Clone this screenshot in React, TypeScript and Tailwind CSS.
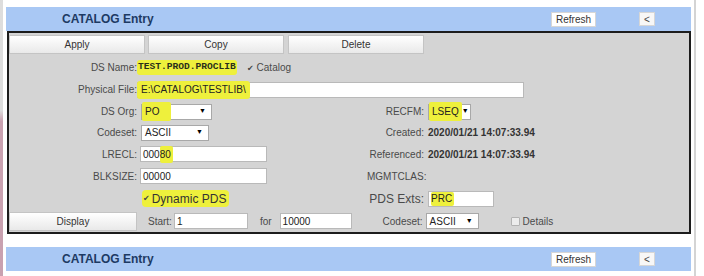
const HL = "bg-[#eef03c]";

function Header() {
  return (
    <div className="flex h-[24px] items-center bg-[#a9c8f4]">
      <span className="pl-[56px] text-[12px] font-bold text-[#1d3a63]">CATALOG Entry</span>
      <div className="flex-1" />
      <button className="flex h-[15px] w-[45px] items-center justify-center border border-[#d6d6d6] bg-white text-[10px] text-[#333]">
        Refresh
      </button>
      <button className="ml-[43px] mr-[36px] flex h-[14px] w-[16px] items-center justify-center border border-[#d6d6d6] bg-[#f7f7f7] text-[10px] text-[#444]">
        &lt;
      </button>
    </div>
  );
}

function Btn({ label, w }: { label: string; w: string }) {
  return (
    <button
      className={`flex h-[19px] ${w} items-center justify-center border border-[#c4c4c4] bg-linear-to-b from-white to-[#e9e9e9] text-[10px] text-[#333]`}
    >
      {label}
    </button>
  );
}

function Select({ value, w, hl }: { value: string; w: string; hl?: string }) {
  return (
    <div className={`flex h-[16px] ${w} items-center justify-between border border-[#a8a8a8] bg-white pr-[5px] text-[#222]`}>
      <span className={`flex h-[19px] items-center rounded-[2px] px-[3px] ${hl ?? ""}`}>{value}</span>
      <span className="text-[7px] text-black">▼</span>
    </div>
  );
}

function Field({ w, children }: { w: string; children: React.ReactNode }) {
  return (
    <div className={`flex h-[16px] ${w} items-center border border-[#b9b9b9] bg-white pl-[2px] text-[#222]`}>
      {children}
    </div>
  );
}

function Check() {
  return <span className="font-['DejaVu_Sans',sans-serif] text-[8px] leading-none text-[#444]">✔</span>;
}

function Row({
  h,
  label,
  left,
  rlabel,
  right,
}: {
  h: string;
  label?: string;
  left: React.ReactNode;
  rlabel?: React.ReactNode;
  right?: React.ReactNode;
}) {
  return (
    <div className={`flex ${h} items-center`}>
      <div className="w-[128px] text-right">{label}</div>
      <div className="flex w-[230px] items-center">{left}</div>
      <div className="w-[57px] whitespace-nowrap text-right">{rlabel}</div>
      <div className="ml-[4px] flex items-center">{right}</div>
    </div>
  );
}

export default function App() {
  return (
    <div className="flex h-[276px] w-[704px] bg-white font-['Liberation_Sans',Arial,sans-serif] text-[10px] text-[#4a4a4a]">
      <div className="w-[3px] bg-linear-to-b from-[#dddddd] from-40% to-[#c9a1b0] to-44%" />
      <div className="w-[3px]" />

      <div className="flex w-[685px] flex-col pt-[7px]">
        <Header />

        {/* form panel */}
        <div className="ml-[1px] h-[203px] w-[684px] border-2 border-[#1c1c1c] bg-[#d4d4d4]">
          <div className="mt-[2px] flex">
            <Btn label="Apply" w="w-[136px]" />
            <div className="ml-[3px]">
              <Btn label="Copy" w="w-[136px]" />
            </div>
            <div className="ml-[4px]">
              <Btn label="Delete" w="w-[136px]" />
            </div>
          </div>

          <div className="mt-[3px] flex h-[21px] items-center">
            <div className="w-[128px] text-right">DS Name:</div>
            <span className={`flex h-[15px] items-center rounded-[3px] px-[1px] font-['Liberation_Mono',monospace] text-[9.6px] font-bold text-[#2a2f1a] ${HL}`}>
              TEST.PROD.PROCLIB
            </span>
            <span className="ml-[10px]">
              <Check />
            </span>
            <span className="ml-[3px]">Catalog</span>
          </div>

          <div className="flex h-[23px] items-center">
            <div className="w-[128px] text-right">Physical File:</div>
            <Field w="w-[387px]">
              <span className={`-ml-[3px] flex h-[18px] items-center rounded-[3px] px-[4px] ${HL}`}>E:\CATALOG\TESTLIB\</span>
            </Field>
          </div>

          <Row
            h="h-[21px]"
            label="DS Org:"
            left={
              <div className="pl-[4px]">
                <Select value="PO" w="w-[71px]" hl={`${HL} pr-[12px]`} />
              </div>
            }
            rlabel="RECFM:"
            right={<Select value="LSEQ" w="w-[43px]" hl={HL} />}
          />

          <Row
            h="h-[21px]"
            label="Codeset:"
            left={
              <div className="pl-[4px]">
                <Select value="ASCII" w="w-[68px]" />
              </div>
            }
            rlabel="Created:"
            right={<span className="text-[10px] font-bold text-[#333]">2020/01/21 14:07:33.94</span>}
          />

          <Row
            h="h-[22px]"
            label="LRECL:"
            left={
              <div className="pl-[3px]">
                <Field w="w-[127px]">
                  <span>000</span>
                  <span className={`flex h-[17px] items-center rounded-[2px] pr-[2px] ${HL}`}>80</span>
                </Field>
              </div>
            }
            rlabel="Referenced:"
            right={<span className="text-[10px] font-bold text-[#333]">2020/01/21 14:07:33.94</span>}
          />

          <Row
            h="h-[22px]"
            label="BLKSIZE:"
            left={
              <div className="pl-[3px]">
                <Field w="w-[127px]">00000</Field>
              </div>
            }
            rlabel="MGMTCLAS:"
          />

          <Row
            h="h-[23px]"
            left={
              <div className="ml-[5px] flex h-[17px] items-center rounded-[4px] pl-[1px] pr-[3px] bg-[#eef03c] text-[12px] text-[#333]">
                <Check />
                <span className="ml-[2px]">Dynamic PDS</span>
              </div>
            }
            rlabel={<span className="text-[12px]">PDS Exts:</span>}
            right={
              <Field w="w-[66px]">
                <span className={`flex h-[14px] items-center rounded-[2px] pr-[2px] ${HL}`}>PRC</span>
              </Field>
            }
          />

          <div className="flex h-[22px] items-center">
            <Btn label="Display" w="w-[128px]" />
            <span className="ml-[11px]">Start:</span>
            <div className="ml-[2px]">
              <Field w="w-[74px]">1</Field>
            </div>
            <span className="ml-[12px]">for</span>
            <div className="ml-[8px]">
              <Field w="w-[72px]">10000</Field>
            </div>
            <span className="ml-[31px]">Codeset:</span>
            <div className="ml-[3px]">
              <Select value="ASCII" w="w-[53px]" />
            </div>
            <span className="ml-[32px] h-[9px] w-[9px] rounded-[1px] border border-[#b3b3b3] bg-[#ececec]" />
            <span className="ml-[3px]">Details</span>
          </div>
        </div>

        <div className="h-[13px]" />
        <Header />
      </div>

      <div className="w-[3px]" />
      <div className="w-[2px] bg-[#d4d4d4]" />
    </div>
  );
}
